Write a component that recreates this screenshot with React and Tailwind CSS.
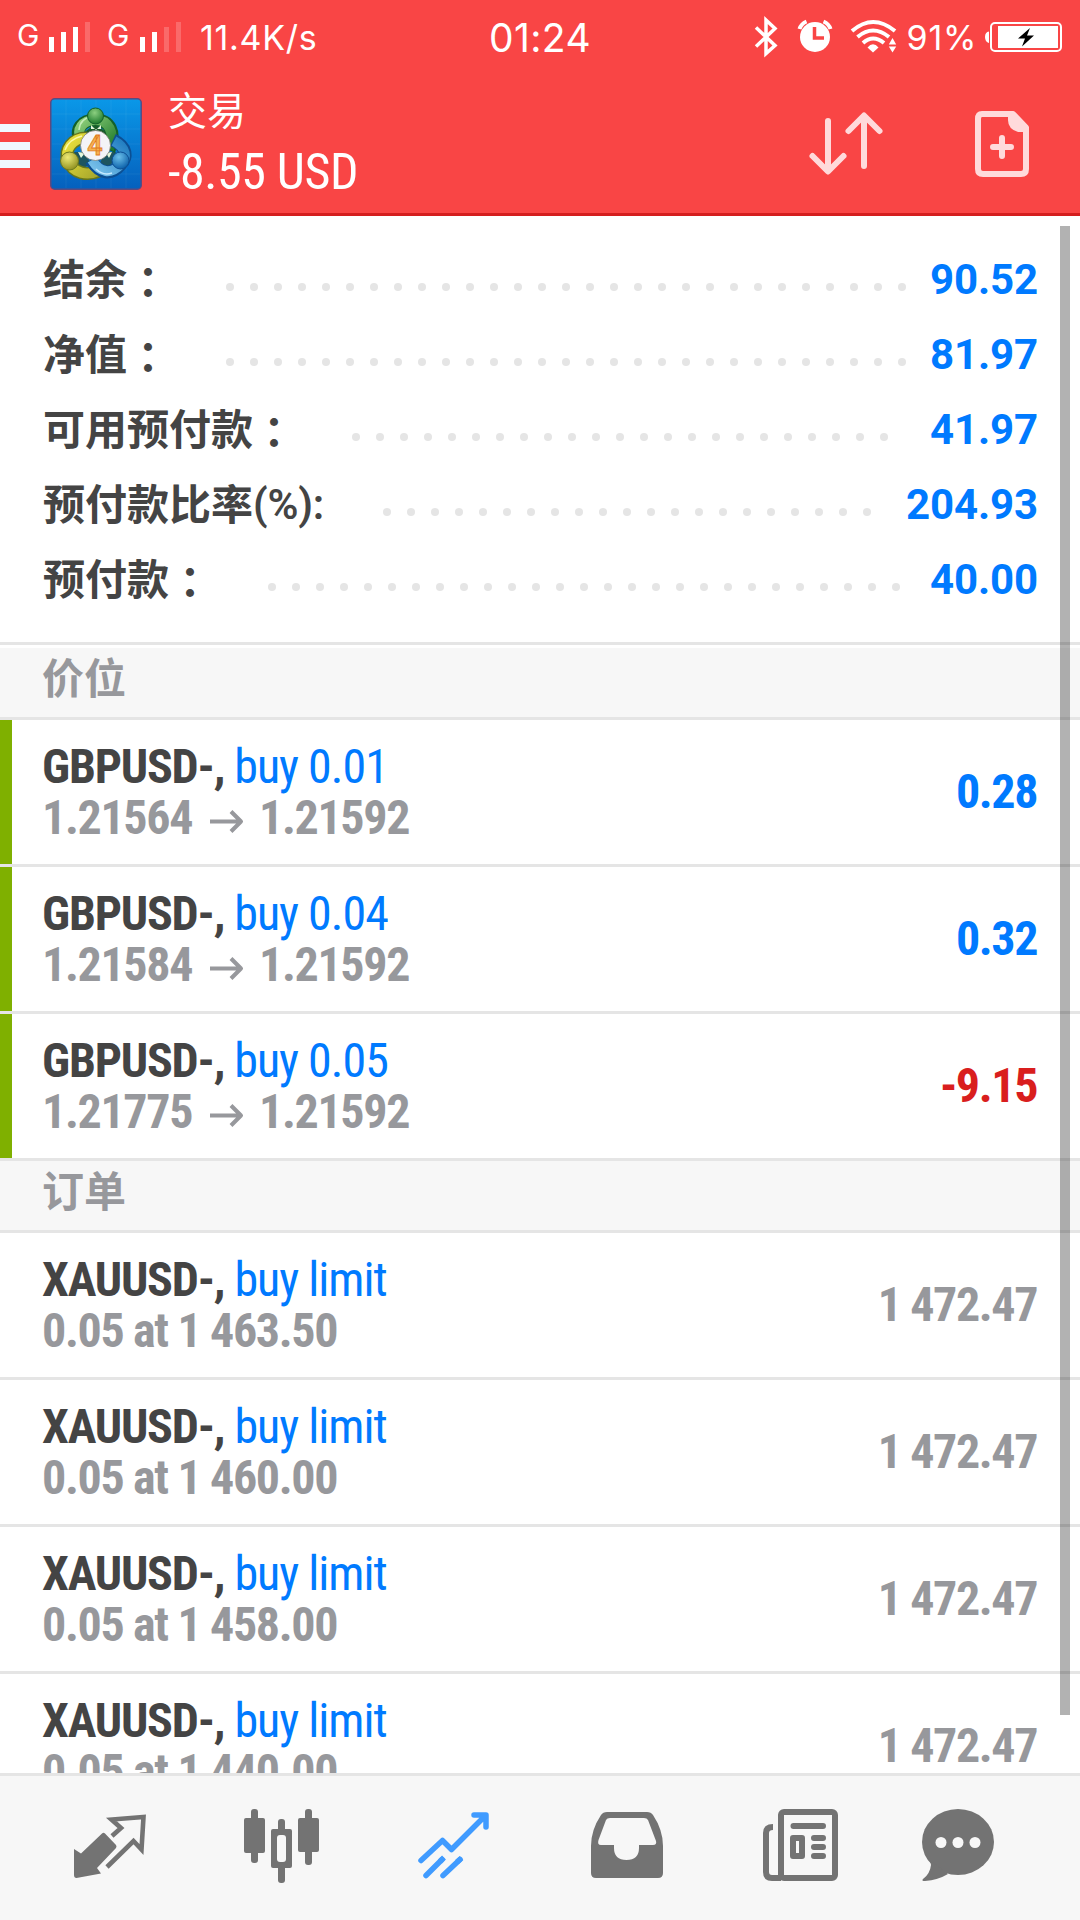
import React from "react";

const accounts = [
  { label: "结余", value: "90.52", dots: 29, end: "w-[131px]" },
  { label: "净值", value: "81.97", dots: 29, end: "w-[131px]" },
  { label: "可用预付款", value: "41.97", dots: 23, end: "w-[149px]" },
  { label: "预付款比率", suffix: "(%):", value: "204.93", dots: 21, end: "w-[166px]" },
  { label: "预付款", value: "40.00", dots: 27, end: "w-[137px]" },
];

const positions = [
  { action: "buy 0.01", open: "1.21564", now: "1.21592", profit: "0.28", tone: "text-[#007aff]" },
  { action: "buy 0.04", open: "1.21584", now: "1.21592", profit: "0.32", tone: "text-[#007aff]" },
  { action: "buy 0.05", open: "1.21775", now: "1.21592", profit: "-9.15", tone: "text-[#d91e1e]" },
];

const orders = ["0.05 at 1 463.50", "0.05 at 1 460.00", "0.05 at 1 458.00", "0.05 at 1 440.00"];

function Signal({ level }) {
  return (
    <div className="flex h-[30px] items-end gap-[7px]">
      {["h-[15px]", "h-[20px]", "h-[25px]", "h-[30px]"].map((h, i) => (
        <div key={h} className={`w-[5px] ${h} ${i < level ? "bg-white" : "bg-white/20"}`} />
      ))}
    </div>
  );
}

function StatusIcons() {
  return (
    <svg className="h-[44px] w-[144px]" viewBox="753 15 144 44" fill="none" stroke="#fff">
      <path d="M756 27.500L775 45.500L766 53.500V20L775 28.500L756 46.500" strokeWidth="3.500" />
      <circle cx="815" cy="37" r="15" fill="#fff" stroke="none" />
      <path d="M799.500 29a12 12 0 0 1 7-7.500M830.500 29a12 12 0 0 0-7-7.500" strokeWidth="4" />
      <path d="M814.500 27V38H824" stroke="#f94545" strokeWidth="3.500" />
      <path d="M852 31Q873 13 895 31" strokeWidth="4" />
      <path d="M857.500 37Q873 24 889 37" strokeWidth="4" />
      <path d="M863 43Q873 34 884 43" strokeWidth="4" />
      <path d="M867.500 47.500Q873 41 878.500 47.500L873 52.500Z" fill="#fff" stroke="none" />
      <path d="M888.800 44.500L892.500 38L896.200 44.500ZM888.800 46.500L892.500 52.500L896.200 46.500Z" fill="#fff" stroke="none" />
    </svg>
  );
}

function Battery() {
  return (
    <svg className="h-[32px] w-[78px]" viewBox="985 20 78 32">
      <path d="M989 30.500V42Q985 41 985 36T989 30.500Z" fill="#fff" />
      <rect x="991" y="22" width="70" height="28" rx="4" fill="none" stroke="#fff" strokeWidth="2" />
      <rect x="998" y="25" width="60" height="22" fill="#fff" />
      <path d="M1030 27L1018 37.500H1025L1022 45.500L1034 34.500H1027Z" fill="#000" />
    </svg>
  );
}

function AppLogo() {
  return (
    <svg className="h-[92px] w-[92px]" viewBox="0 0 92 92">
      <defs>
        <linearGradient id="sky" x1="0" y1="0" x2="0" y2="1">
          <stop offset="0" stopColor="#0a98e8" />
          <stop offset="1" stopColor="#0560bd" />
        </linearGradient>
        <linearGradient id="leaf" x1="0" y1="0" x2="1" y2="1">
          <stop offset="0" stopColor="#8fd07a" />
          <stop offset="1" stopColor="#1f7a2c" />
        </linearGradient>
        <linearGradient id="gold" x1="0" y1="0" x2="1" y2="1">
          <stop offset="0" stopColor="#ece23c" />
          <stop offset="1" stopColor="#a9a92c" />
        </linearGradient>
        <linearGradient id="wave" x1="0" y1="1" x2="1" y2="0">
          <stop offset="0" stopColor="#7cc4ec" />
          <stop offset="1" stopColor="#1f7cc0" />
        </linearGradient>
        <radialGradient id="greenHead" cx=".45" cy=".3" r=".7">
          <stop offset="0" stopColor="#8ccf80" />
          <stop offset="1" stopColor="#1d7a2c" />
        </radialGradient>
        <radialGradient id="goldHead" cx=".4" cy=".3" r=".7">
          <stop offset="0" stopColor="#eeea74" />
          <stop offset="1" stopColor="#929222" />
        </radialGradient>
        <radialGradient id="blueHead" cx=".4" cy=".3" r=".7">
          <stop offset="0" stopColor="#6cc0ea" />
          <stop offset="1" stopColor="#0d62ab" />
        </radialGradient>
      </defs>
      <rect x=".75" y=".75" width="90.500" height="90.500" rx="4" fill="url(#sky)" stroke="#5c4a80" strokeWidth="1.500" />
      <path d="M16 2V90M31 2V90M46 2V90M61 2V90M76 2V90M2 16H90M2 31H90M2 46H90M2 61H90M2 76H90" stroke="#fff" strokeOpacity=".06" />
      <path d="M45 26L32 36L36 48H56L59 36Z" fill="#1c5c2c" />
      <path d="M24 54L30 72L40 66L36 54ZM66 54L60 70L50 66L54 54Z" fill="#1d5560" />
      <g fill="none">
        <path d="M31 44C24 31 32 22 45.500 22S67 34 59 52" stroke="#14602a" strokeWidth="13" />
        <path d="M31.500 43C25 31 33 22 45.500 22S66 34 59 51" stroke="url(#leaf)" strokeWidth="10" />
        <path d="M37 40C22 40 14 52 18 62C23 76 38 78 49 73" stroke="#66761c" strokeWidth="13" />
        <path d="M36 40C22 40 14.500 52 18 62C23 76 38 78 48 73" stroke="url(#gold)" strokeWidth="10" />
        <path d="M63 42C78 49 77 60 71 66C61 78 50 76 41 62" stroke="#0c4f93" strokeWidth="13" />
        <path d="M64 43C77 50 77 60 71 66C61 77 50 75 42 62" stroke="url(#wave)" strokeWidth="10" />
        <path d="M29 32Q30 20 42 19" stroke="#c5ecb8" strokeWidth="1.500" />
        <path d="M15 52Q19 41 32 38" stroke="#fbf9a8" strokeWidth="1.500" />
        <path d="M46 71Q53 78 62 75" stroke="#c6eaff" strokeWidth="1.500" />
      </g>
      <path d="M41 27L46 32L51 27V31H41ZM28 54L35 55L31 60ZM62 54L56 55L59 60Z" fill="#e6f8dc" />
      <circle cx="45.500" cy="18" r="8" fill="url(#greenHead)" stroke="#14602a" />
      <circle cx="19.500" cy="63" r="9" fill="url(#goldHead)" stroke="#6d7920" />
      <circle cx="70.500" cy="62.500" r="8.500" fill="url(#blueHead)" stroke="#0c4f93" />
      <circle cx="45.500" cy="47.500" r="15" fill="#f4f4f7" stroke="#77776a" strokeWidth=".7" />
      <text x="45" y="56.500" textAnchor="middle" fontFamily="Roboto, sans-serif" fontWeight="600" fontSize="27" fill="#f7b250" stroke="#e07a1d" strokeWidth=".8">4</text>
    </svg>
  );
}

function HeaderIcons() {
  return (
    <svg className="h-[72px] w-[224px]" viewBox="808 108 224 72" fill="none" stroke="#ffdadb" strokeWidth="6" strokeLinecap="round" strokeLinejoin="round">
      <path d="M828 121V171M812.500 156L828 171.500L843.500 156" />
      <path d="M864 166V116M848.500 131L864 115.500L879.500 131" />
      <path d="M982 114H1013L1026 127.500V169Q1026 174 1021 174H983Q978 174 978 169V119Q978 114 982 114Z" />
      <path d="M1008 115H1015L1026 127V132H1018Q1008 129 1008 120Z" fill="#ffdadb" stroke="none" />
      <path d="M993 147H1011M1002 138V156" />
    </svg>
  );
}

function Section({ children }) {
  return (
    <div className="h-[72px] shrink-0 border-b-[3px] border-[#e5e5e5] bg-[#f7f7f7] pl-[42px] text-[42px] leading-[56px] font-bold text-[#97989c]">
      {children}
    </div>
  );
}

function Row({ symbol, action, detail, value, tone, open }) {
  return (
    <div className="flex h-[147px] shrink-0 border-b-[3px] border-[#e5e5e5] font-[Roboto] [font-stretch:75%]">
      <div className={`w-3 shrink-0 ${open ? "bg-[#7fb000]" : ""}`} />
      <div className="flex grow items-center justify-between pr-[43px] pl-[30px]">
        <div className="flex flex-col whitespace-nowrap text-[48px] leading-[51px]">
          <div className="flex">
            <span className="font-bold tracking-[-1.2px] text-[#444]">{symbol}</span>
            <span className="ml-[10px] tracking-[-1px] text-[#007aff]">{action}</span>
          </div>
          <div className="flex font-bold tracking-[-1.35px] text-[#97989c]">{detail}</div>
        </div>
        <div className={`text-[48px] font-bold tracking-[-1.4px] ${tone}`}>{value}</div>
      </div>
    </div>
  );
}

function Arrow() {
  return (
    <svg className="mr-[15px] ml-[18px] h-[51px] w-[34px]" viewBox="0 0 34 51" fill="none" stroke="#97989c" strokeWidth="4">
      <path d="M0 29.500H31M21 19.500L31 29.500L21 39.500" strokeLinejoin="round" />
    </svg>
  );
}

function NavBar() {
  const icon = "h-20 w-20 shrink-0";
  return (
    <nav className="flex h-[147px] shrink-0 border-t-[3px] border-[#e5e5e5] bg-[#f7f7f7] pt-[29px] pl-[70px]">
      <svg className={icon} viewBox="0 0 80 80" fill="#737373">
        <path d="M4 44L11 48.500L32 28.500Q33.500 27 35 28.500L46 40Q47 41.500 46 43L27 63L31 68.500L6.500 73Q4 73 4 70Z" />
        <path d="M42 31L51 23L41.500 14.500L73.500 12L71.500 44.500L63.500 36L37 62" fill="none" stroke="#737373" strokeWidth="4.600" />
      </svg>
      <svg className={`${icon} ml-[92px]`} viewBox="0 0 80 80" fill="#737373">
        <rect x="9" y="4" width="7" height="54" rx="3" />
        <rect x="2" y="13" width="21" height="35" rx="2" />
        <rect x="63" y="4" width="7" height="56" rx="3" />
        <rect x="56" y="13" width="21" height="34" rx="2" />
        <rect x="36" y="14" width="7" height="64" rx="3" />
        <rect x="29" y="24" width="21" height="39" rx="2" />
        <rect x="35" y="30" width="9" height="27" rx="3" fill="#f7f7f7" />
      </svg>
      <svg className={`${icon} ml-[92px]`} viewBox="0 0 80 80" fill="none" stroke="#409bff" strokeWidth="5.500" strokeLinecap="round">
        <path d="M7 55.500L28.500 35.500L37.500 44.500L71 11M60 10H72V22" strokeLinejoin="round" />
        <path d="M12 70.500L28 54.500M29 70.500L46 54.500" />
        <path d="M26 56.500L30 52.500M43 57L47.500 53" strokeLinecap="butt" />
      </svg>
      <svg className={`${icon} ml-[93px]`} viewBox="0 0 80 80" fill="#737373">
        <path fillRule="evenodd" d="M20 7H60Q64 7 66 10Q76 25 76 41V68Q76 73 71 73H9Q4 73 4 68V41Q4 25 14 10Q16 7 20 7ZM23 13Q20 13 19 15L11.500 35Q10 40 14 40H27V43Q27 55 39.500 55T52 43V40H66Q70 40 69 36L61 15Q60 13 57 13Z" />
      </svg>
      <svg className={`${icon} ml-[94px]`} viewBox="0 0 80 80" fill="none" stroke="#737373" strokeWidth="6">
        <rect x="20" y="7" width="54" height="66" rx="3" />
        <path d="M12 22Q5 22 5 28V67Q5 73 11 73H20" />
        <path d="M32.500 21H62M53 33H62M53 42H62M53 51H62" strokeLinecap="round" />
        <rect x="32" y="33" width="9" height="18" strokeLinejoin="round" />
      </svg>
      <svg className={`${icon} ml-[77px]`} viewBox="0 0 80 80" fill="#737373">
        <ellipse cx="40" cy="37" rx="36" ry="33" />
        <path d="M9 53Q13 57 13 60Q12 69 5 74Q3 76 7 76Q20 75 30 69Z" />
        <g fill="#f7f7f7">
          <circle cx="23" cy="37.500" r="5.500" />
          <circle cx="40" cy="37.500" r="5.500" />
          <circle cx="57" cy="37.500" r="5.500" />
        </g>
      </svg>
    </nav>
  );
}

export default function App() {
  return (
    <div className="relative flex h-[1920px] w-[1080px] flex-col overflow-hidden bg-white font-['Noto_Sans_CJK_SC',sans-serif]">
      <header className="flex h-[216px] shrink-0 flex-col border-b-[3px] border-[#d41e1e] bg-[#f94545] text-white">
        <div className="grid h-[74px] grid-cols-[1fr_auto_1fr] items-center font-[Inter] text-[34px]">
          <div className="flex items-center pl-[17px]">
            <span className="-mt-[3px] w-[22px] text-[30px]">G</span>
            <div className="ml-[10px]"><Signal level={3} /></div>
            <span className="-mt-[3px] ml-[17px] w-[22px] text-[30px]">G</span>
            <div className="ml-[11px]"><Signal level={2} /></div>
            <span className="ml-[19px] tracking-[0.7px]">11.4K/s</span>
          </div>
          <div className="pt-[2px] text-[39px] tracking-[0.4px]">01:24</div>
          <div className="flex items-center justify-end pr-[17px]">
            <StatusIcons />
            <span className="mr-[8px] ml-[10px] tracking-[0.7px]">91%</span>
            <Battery />
          </div>
        </div>
        <div className="flex h-[139px] items-center">
          <div className="mt-[5px] flex w-[30px] flex-col gap-[10px]">
            <div className="h-2 bg-[#f0f8ff]" />
            <div className="h-2 bg-[#f0f8ff]" />
            <div className="h-2 bg-[#f0f8ff]" />
          </div>
          <div className="ml-5"><AppLogo /></div>
          <div className="ml-[26px] flex grow flex-col">
            <div className="text-[39px] leading-[52px]">交易</div>
            <div className="pt-[5px] font-[Roboto] text-[50px] leading-[66px] tracking-[-0.4px] [font-stretch:75%]">-8.55 USD</div>
          </div>
          <div className="mr-[48px]"><HeaderIcons /></div>
        </div>
      </header>

      <main className="flex h-[1557px] shrink-0 flex-col overflow-hidden">
        <div className="mb-[3px] flex h-[429px] shrink-0 flex-col border-b-[3px] border-[#e5e5e5] pt-[26px] pr-[43px] pl-[43px]">
          {accounts.map((a) => (
            <div key={a.label} className="flex h-[75px] shrink-0 items-center">
              <div className="mb-[5px] flex text-[42px] leading-[70px] font-bold whitespace-nowrap text-[#444]">
                <span lang="zh-CN">{a.label}</span>
                {a.suffix ? (
                  <span className="mt-[3px] -mb-[3px] font-[Roboto] font-semibold tracking-[-0.2px]">{a.suffix}</span>
                ) : (
                  <span lang="zh-TW" className="mt-[3px] -mb-[3px] font-['Noto_Sans_CJK_TC',sans-serif]">：</span>
                )}
              </div>
              <div className="mt-[15px] flex grow justify-end gap-4">
                {Array.from({ length: a.dots }, (_, i) => (
                  <div key={i} className="h-2 w-2 shrink-0 rounded-full bg-[#e5e5e5]" />
                ))}
              </div>
              <div className={`${a.end} shrink-0 text-right font-[Roboto] text-[42px] font-bold text-[#007aff]`}>
                <span className="-mr-px tracking-[-0.1px]">{a.value}</span>
              </div>
            </div>
          ))}
        </div>
        <Section>价位</Section>
        {positions.map((p) => (
          <Row key={p.action} open symbol="GBPUSD-," action={p.action} detail={<>{p.open}<Arrow />{p.now}</>} value={p.profit} tone={p.tone} />
        ))}
        <Section>订单</Section>
        {orders.map((o) => (
          <Row key={o} symbol="XAUUSD-," action="buy limit" detail={o} value="1 472.47" tone="text-[#97989c]" />
        ))}
      </main>

      <NavBar />
      <div className="absolute top-[226px] right-[10px] h-[1489px] w-[10px] bg-black/30" />
    </div>
  );
}
